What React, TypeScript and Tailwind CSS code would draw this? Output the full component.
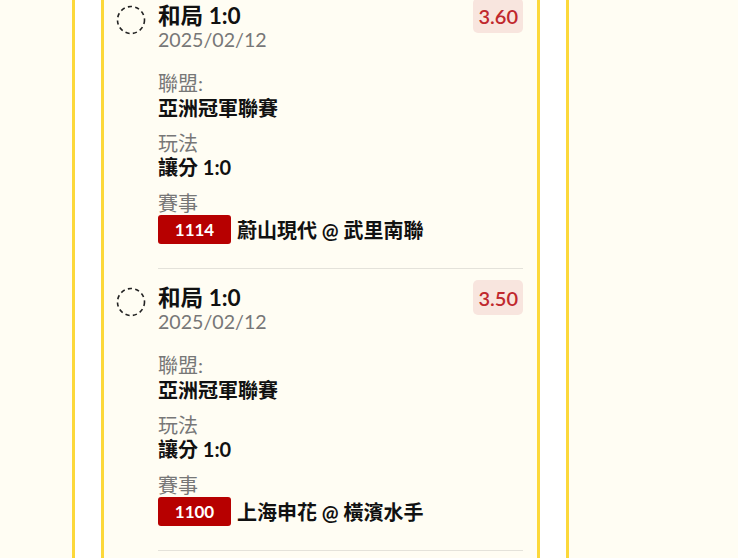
import React from "react";

type Bet = {
  title: string;
  date: string;
  league: string;
  play: string;
  code: string;
  match: string;
  odds: string;
};

const bets: Bet[] = [
  { title: "和局 1:0", date: "2025/02/12", league: "亞洲冠軍聯賽", play: "讓分 1:0", code: "1114", match: "蔚山現代 @ 武里南聯", odds: "3.60" },
  { title: "和局 1:0", date: "2025/02/12", league: "亞洲冠軍聯賽", play: "讓分 1:0", code: "1100", match: "上海申花 @ 橫濱水手", odds: "3.50" },
];

const font = { fontFamily: 'Lato, "Noto Sans CJK TC", "Noto Sans", sans-serif' };

function DashedCircle() {
  return (
    <svg width="30" height="30" viewBox="0 0 30 30" className="shrink-0 mt-[18px]">
      <circle cx="15" cy="15" r="13.5" fill="none" stroke="#222" strokeWidth="1.6" strokeDasharray="4.2 3.3" />
    </svg>
  );
}

function Item({ b }: { b: Bet }) {
  return (
    <div className="flex items-start gap-3">
      <DashedCircle />
      <div className="flex-1 border-b border-[#e4e2da] pt-[11px] pb-6">
        <div className="flex items-start justify-between">
          <div className="pt-[6px]">
            <div className="text-[22.6px] leading-[24px] font-bold text-[#111]">{b.title}</div>
            <div className="text-[19.6px] leading-[24px] text-[#777]">{b.date}</div>
          </div>
          <div className="h-[35px] px-[5px] rounded-[5px] bg-[#f8e5de] text-[#c0282d] text-[20px] font-semibold flex items-center">
            {b.odds}
          </div>
        </div>
        <div className="mt-[19px] text-[20px] leading-[24px] text-[#777]">聯盟:</div>
        <div className="mt-px text-[20px] leading-[24px] font-bold text-[#111]">{b.league}</div>
        <div className="mt-[11px] text-[20px] leading-[24px] text-[#777]">玩法</div>
        <div className="text-[20px] leading-[24px] font-bold text-[#111]">{b.play}</div>
        <div className="mt-3 text-[20px] leading-[24px] text-[#777]">賽事</div>
        <div className="flex items-center gap-1.5">
          <div className="w-[73px] h-[29px] rounded-[3px] bg-[#b70000] text-white text-[17px] font-bold flex items-center justify-center">
            {b.code}
          </div>
          <div className="text-[20px] leading-[24px] font-bold text-[#111]">{b.match}</div>
        </div>
      </div>
    </div>
  );
}

export default function App() {
  return (
    <div className="h-[558px] w-full overflow-hidden bg-[#fffdf3] flex" style={font}>
      <div className="ml-[72px] w-[497px] border-x-[3px] border-[#fcd83a] bg-white px-[26px] flex">
        <div className="flex-1 border-x-[3px] border-[#fcd83a] bg-[#fffdf3] pl-3 pr-[14px] flex flex-col">
          <div className="-mt-[13px]">
            {bets.map((b, i) => (
              <Item key={i} b={b} />
            ))}
          </div>
        </div>
      </div>
    </div>
  );
}
